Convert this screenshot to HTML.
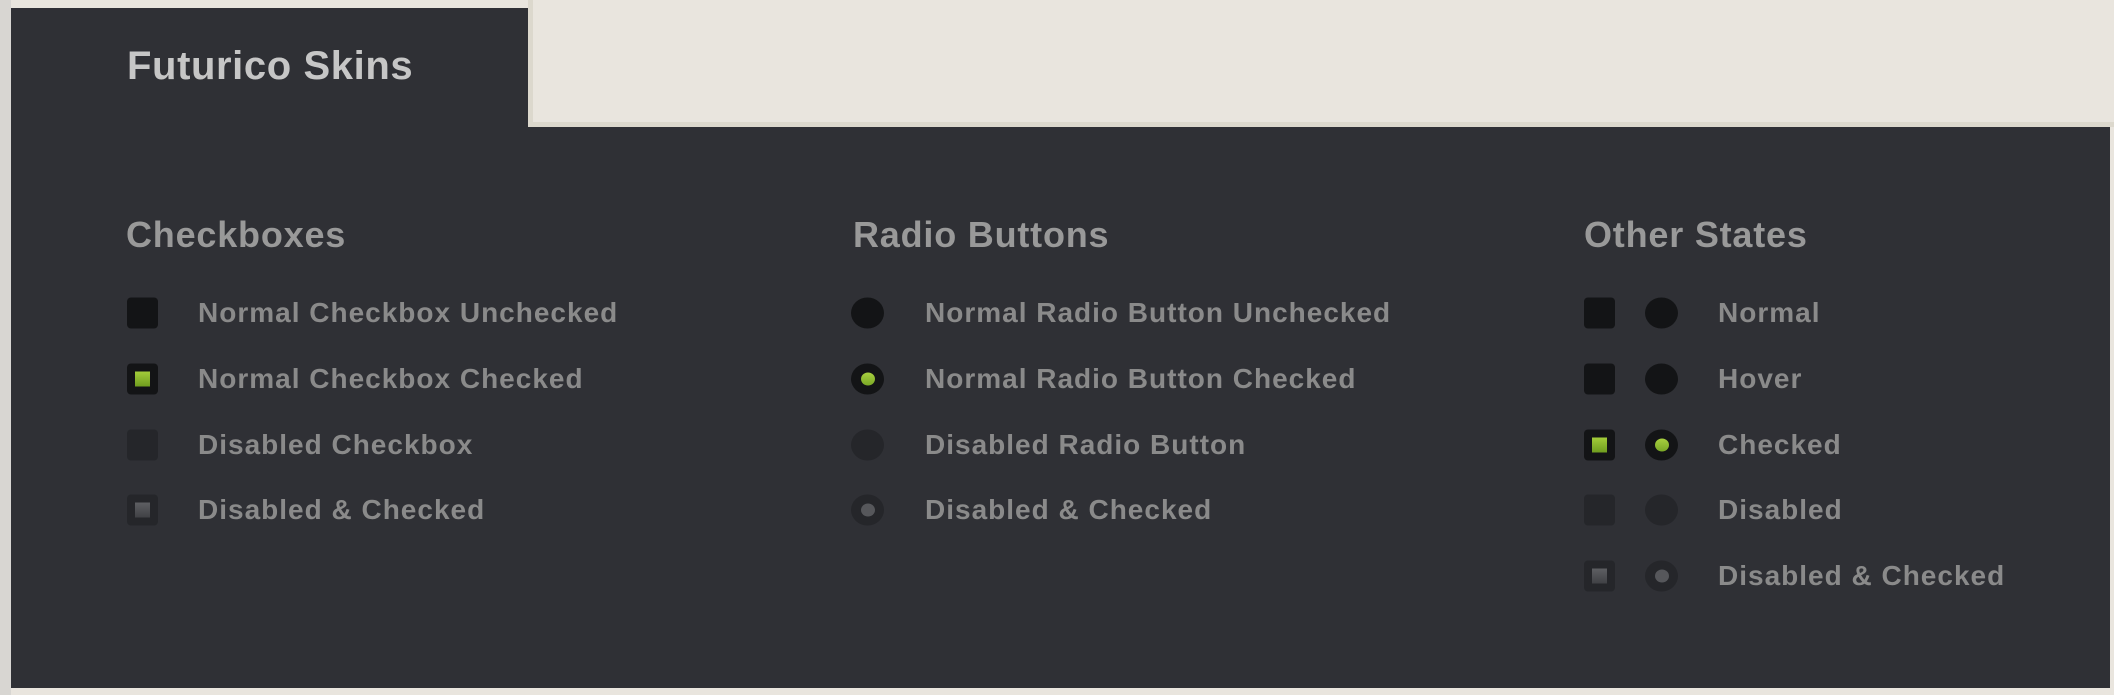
<!DOCTYPE html>
<html><head><meta charset="utf-8"><style>
*{margin:0;padding:0;box-sizing:border-box}
body{width:2114px;height:695px;background:#e9e5de;position:relative;overflow:hidden;font-family:"Liberation Sans",sans-serif}
.lstrip{position:absolute;left:0;top:0;width:11px;height:695px;background:#d8d6d2}
.tab{position:absolute;left:11px;top:8px;width:517px;height:170px;background:#2f3035}
.beigeline{position:absolute;left:528px;top:0;right:0;height:127px;border-bottom:5px solid #dcd8cd;border-left:5px solid #dcd8cd}
.main{position:absolute;left:11px;top:127px;width:2099px;height:561px;background:#2f3035}
.bottom{position:absolute;left:11px;top:688px;width:2099px;height:7px;background:#e9e5de}
h1{position:absolute;left:127px;top:44px;font-size:40px;font-weight:bold;color:#c6c6c6;letter-spacing:0.6px}
h2{position:absolute;font-size:36px;font-weight:bold;color:#999;top:214px;letter-spacing:0.8px}
.lbl{position:absolute;font-size:28px;font-weight:bold;color:#8a8a8a;transform:translateY(-50%);letter-spacing:1px;white-space:nowrap}
.cb{position:absolute;width:31px;height:31px;border-radius:4px;background:#131416;transform:translateY(-50%)}
.rd{position:absolute;width:33px;height:31px;border-radius:50%;background:#131416;transform:translateY(-50%)}
.dis{background:#25262a}
.cb i{position:absolute;left:8px;top:8px;width:15px;height:15px;background:linear-gradient(#a3cc3a,#6f9d1f)}
.cb.dis i{background:linear-gradient(#5e5f63,#404145)}
.rd i{position:absolute;left:10px;top:9px;width:14px;height:13px;border-radius:50%;background:linear-gradient(#a8d040,#7aa826)}
.rd.dis i{background:#56575b}
</style></head><body>
<div class="lstrip"></div>
<div class="beigeline"></div>
<div class="main"></div>
<div class="tab"></div>
<div class="bottom"></div>
<h1>Futurico Skins</h1>
<h2 style="left:126px">Checkboxes</h2>
<h2 style="left:853px">Radio Buttons</h2>
<h2 style="left:1584px">Other States</h2>

<div class="cb" style="left:127px;top:313px"></div><div class="lbl" style="left:198px;top:313px">Normal Checkbox Unchecked</div>
<div class="cb" style="left:127px;top:379px"><i></i></div><div class="lbl" style="left:198px;top:379px">Normal Checkbox Checked</div>
<div class="cb dis" style="left:127px;top:445px"></div><div class="lbl" style="left:198px;top:445px">Disabled Checkbox</div>
<div class="cb dis" style="left:127px;top:510px"><i></i></div><div class="lbl" style="left:198px;top:510px">Disabled &amp; Checked</div>

<div class="rd" style="left:851px;top:313px"></div><div class="lbl" style="left:925px;top:313px">Normal Radio Button Unchecked</div>
<div class="rd" style="left:851px;top:379px"><i></i></div><div class="lbl" style="left:925px;top:379px">Normal Radio Button Checked</div>
<div class="rd dis" style="left:851px;top:445px"></div><div class="lbl" style="left:925px;top:445px">Disabled Radio Button</div>
<div class="rd dis" style="left:851px;top:510px"><i></i></div><div class="lbl" style="left:925px;top:510px">Disabled &amp; Checked</div>

<div class="cb" style="left:1584px;top:313px"></div><div class="rd" style="left:1645px;top:313px"></div><div class="lbl" style="left:1718px;top:313px">Normal</div>
<div class="cb" style="left:1584px;top:379px"></div><div class="rd" style="left:1645px;top:379px"></div><div class="lbl" style="left:1718px;top:379px">Hover</div>
<div class="cb" style="left:1584px;top:445px"><i></i></div><div class="rd" style="left:1645px;top:445px"><i></i></div><div class="lbl" style="left:1718px;top:445px">Checked</div>
<div class="cb dis" style="left:1584px;top:510px"></div><div class="rd dis" style="left:1645px;top:510px"></div><div class="lbl" style="left:1718px;top:510px">Disabled</div>
<div class="cb dis" style="left:1584px;top:576px"><i></i></div><div class="rd dis" style="left:1645px;top:576px"><i></i></div><div class="lbl" style="left:1718px;top:576px">Disabled &amp; Checked</div>
</body></html>
